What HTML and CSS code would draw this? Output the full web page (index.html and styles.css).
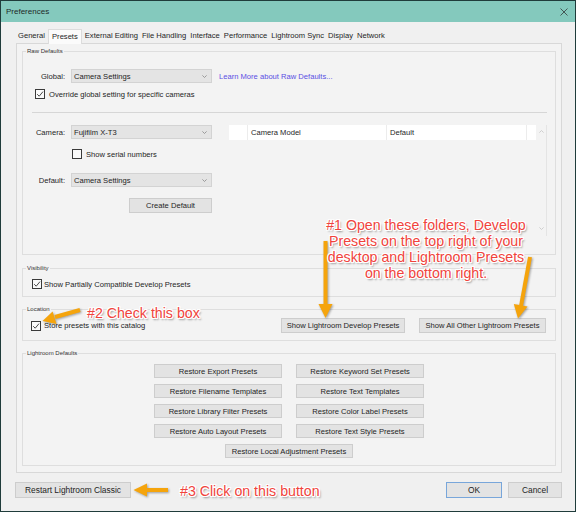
FILE: index.html
```html
<!DOCTYPE html>
<html lang="en">
<head>
<meta charset="utf-8">
<title>Preferences</title>
<link rel="stylesheet" href="styles.css">
</head>
<body>
<div class="window">
  <div class="titlebar">
    <span class="title">Preferences</span>
    <svg class="close" width="8" height="8" viewBox="0 0 8 8"><path d="M0.5 0.5L7.5 7.5M7.5 0.5L0.5 7.5" stroke="#3c4a48" stroke-width="0.9" fill="none"/></svg>
  </div>
  <div class="content">
    <div class="tabs">
      <span class="tab">General</span><span class="tab active">Presets</span><span class="tab">External Editing</span><span class="tab">File Handling</span><span class="tab">Interface</span><span class="tab">Performance</span><span class="tab">Lightroom Sync</span><span class="tab">Display</span><span class="tab">Network</span>
    </div>
    <div class="page">
      <fieldset class="group raw">
        <legend>Raw Defaults</legend>
        <div class="row global">
          <span class="lbl">Global:</span>
          <div class="select"><span>Camera Settings</span><svg class="chev" width="5" height="3" viewBox="0 0 5 3"><path d="M0.4 0.4L2.5 2.5L4.6 0.4" stroke="#888" stroke-width="0.8" fill="none"/></svg></div>
          <span class="link">Learn More about Raw Defaults...</span>
        </div>
        <div class="check-row override">
          <span class="cb"><svg width="8" height="8" viewBox="0 0 8 8"><path d="M1.2 4.2L3.2 6.2L7 1.6" stroke="#333" stroke-width="0.9" fill="none"/></svg></span>
          <span>Override global setting for specific cameras</span>
        </div>
        <div class="sep"></div>
        <div class="camera-area">
          <div class="cam-left">
            <div class="row">
              <span class="lbl">Camera:</span>
              <div class="select"><span>Fujifilm X-T3</span><svg class="chev" width="5" height="3" viewBox="0 0 5 3"><path d="M0.4 0.4L2.5 2.5L4.6 0.4" stroke="#888" stroke-width="0.8" fill="none"/></svg></div>
            </div>
            <div class="check-row serial">
              <span class="cb"></span>
              <span>Show serial numbers</span>
            </div>
            <div class="row default-row">
              <span class="lbl">Default:</span>
              <div class="select"><span>Camera Settings</span><svg class="chev" width="5" height="3" viewBox="0 0 5 3"><path d="M0.4 0.4L2.5 2.5L4.6 0.4" stroke="#888" stroke-width="0.8" fill="none"/></svg></div>
            </div>
            <button class="btn create">Create Default</button>
          </div>
          <div class="cam-table">
            <div class="table">
              <div class="thead">
                <span class="c0"></span><span class="c1">Camera Model</span><span class="c2">Default</span><span class="c3"></span>
              </div>
            </div>
            <div class="scroll">
              <svg width="5" height="3" viewBox="0 0 5 3"><path d="M0.4 2.6L2.5 0.5L4.6 2.6" stroke="#c4c4c4" stroke-width="0.8" fill="none"/></svg>
              <svg width="5" height="3" viewBox="0 0 5 3"><path d="M0.4 0.4L2.5 2.5L4.6 0.4" stroke="#c4c4c4" stroke-width="0.8" fill="none"/></svg>
            </div>
          </div>
        </div>
      </fieldset>

      <fieldset class="group visibility">
        <legend>Visibility</legend>
        <div class="check-row vis">
          <span class="cb"><svg width="8" height="8" viewBox="0 0 8 8"><path d="M1.2 4.2L3.2 6.2L7 1.6" stroke="#333" stroke-width="0.9" fill="none"/></svg></span>
          <span>Show Partially Compatible Develop Presets</span>
        </div>
      </fieldset>

      <fieldset class="group location">
        <legend>Location</legend>
        <div class="loc-row">
          <div class="check-row loc">
            <span class="cb"><svg width="8" height="8" viewBox="0 0 8 8"><path d="M1.2 4.2L3.2 6.2L7 1.6" stroke="#333" stroke-width="0.9" fill="none"/></svg></span>
            <span>Store presets with this catalog</span>
          </div>
          <div class="loc-buttons">
            <button class="btn show-dev">Show Lightroom Develop Presets</button>
            <button class="btn show-all">Show All Other Lightroom Presets</button>
          </div>
        </div>
      </fieldset>

      <fieldset class="group defaults">
        <legend>Lightroom Defaults</legend>
        <div class="restore-grid">
          <button class="btn">Restore Export Presets</button>
          <button class="btn">Restore Keyword Set Presets</button>
          <button class="btn">Restore Filename Templates</button>
          <button class="btn">Restore Text Templates</button>
          <button class="btn">Restore Library Filter Presets</button>
          <button class="btn">Restore Color Label Presets</button>
          <button class="btn">Restore Auto Layout Presets</button>
          <button class="btn">Restore Text Style Presets</button>
          <button class="btn wide">Restore Local Adjustment Presets</button>
        </div>
      </fieldset>
    </div>

    <div class="footer">
      <button class="btn restart">Restart Lightroom Classic</button>
      <div class="footer-right">
        <button class="btn ok">OK</button>
        <button class="btn cancel">Cancel</button>
      </div>
    </div>
  </div>

  <svg class="arrows" width="576" height="512" viewBox="0 0 576 512">
    <g fill="#f5a40c" stroke="#f5a40c">
      <line x1="325.5" y1="241" x2="325.5" y2="306" stroke-width="4"/>
      <polygon points="318.5,304 332.5,304 325.5,318" stroke="none"/>
      <line x1="530" y1="257" x2="521" y2="306" stroke-width="4"/>
      <polygon points="527.5,306.5 513.8,304 518,318.5" stroke="none"/>
      <line x1="80" y1="310" x2="55" y2="317" stroke-width="4"/>
      <polygon points="56.5,324 52.6,311.5 42.5,321" stroke="none"/>
      <line x1="168" y1="490" x2="146" y2="490" stroke-width="4"/>
      <polygon points="147,483.5 147,496.5 133.5,490" stroke="none"/>
    </g>
  </svg>
  <div class="note note1">#1 Open these folders, Develop<br>Presets on the top right of your<br>desktop and Lightroom Presets<br>on the bottom right.</div>
  <div class="note note2">#2 Check this box</div>
  <div class="note note3">#3 Click on this button</div>
</div>
</body>
</html>
```

FILE: styles.css
```css
* { box-sizing: border-box; }

html, body {
  margin: 0;
  padding: 0;
  background: #f0f0f0;
}

.window {
  position: relative;
  width: 576px;
  height: 512px;
  overflow: hidden;
  border: 1px solid #1f3c3b;
  background: #f0f0f0;
  font-family: "Liberation Sans", Arial, sans-serif;
  font-size: 7.6px;
  color: #1e1e1e;
  display: flex;
  flex-direction: column;
}

.titlebar {
  height: 21px;
  flex: none;
  background: #84c9bd;
  display: flex;
  align-items: center;
  justify-content: space-between;
  padding: 0 7px 0 5px;
}

.title {
  font-size: 8px;
  color: #1d2a28;
}

.close { display: block; }

.content {
  padding: 7px 13px 0 14px;
  display: flex;
  flex-direction: column;
}

.tabs {
  display: flex;
  height: 14px;
  padding-left: 1px;
}

.tab {
  padding: 0 2px;
  line-height: 14px;
  white-space: nowrap;
}

.tab.active {
  position: relative;
  z-index: 1;
  height: 15px;
  padding: 0 3px;
  margin: 0 1px;
  background: #fbfbfb;
  border: 1px solid #dcdcdc;
  border-bottom: none;
  line-height: 13px;
}

.page {
  border: 1px solid #d8d8d8;
  background: #f3f3f3;
  padding: 3px 5px 6px 5px;
  margin-left: 1px;
}

.group {
  margin: 0;
  padding: 0;
  min-inline-size: 0;
  border: 1px solid #dedede;
}

.group legend {
  font-size: 6px;
  line-height: 8px;
  padding: 0 1px;
  margin-left: 3px;
  color: #333;
}

.visibility { margin-top: 9px; padding: 7px 0 7px 0; }
.location { margin-top: 8px; padding: 5px 0 7px 0; }
.defaults { margin-top: 8px; padding: 7px 0 7px 0; }
.raw { padding: 0 0 18px 0; }

.row {
  display: flex;
  align-items: center;
  height: 14px;
}

.lbl {
  width: 42px;
  margin-right: 6px;
  text-align: right;
  white-space: nowrap;
}

.select {
  width: 141px;
  height: 14px;
  background: #e4e4e4;
  border: 1px solid #d3d3d3;
  display: flex;
  align-items: center;
  justify-content: space-between;
  padding: 0 4px 0 2px;
}

.chev { display: block; }

.link {
  margin-left: 7px;
  color: #5a4fe3;
  white-space: nowrap;
}

.global { margin-top: 14px; }

.check-row {
  display: flex;
  align-items: center;
  height: 10px;
  white-space: nowrap;
}

.cb {
  width: 10px;
  height: 10px;
  flex: none;
  border: 1px solid #3a3a3a;
  background: #fafafa;
  display: flex;
  align-items: center;
  justify-content: center;
  margin-right: 4px;
}

.cb svg { display: block; }

.override { margin-top: 6px; padding-left: 12px; }
.serial { margin-top: 10px; padding-left: 49px; }
.vis { padding-left: 9px; }
.vis .cb { margin-right: 2px; }
.loc .cb { margin-right: 3px; }

.sep {
  height: 1px;
  background: #d6d6d6;
  margin: 13px 8px 0 9px;
}

.camera-area {
  margin-top: 12px;
  display: flex;
}

.cam-left {
  width: 189px;
  display: flex;
  flex-direction: column;
}

.default-row { margin-top: 14px; }

.btn {
  font-family: inherit;
  font-size: 7.6px;
  color: #1e1e1e;
  background: #e3e3e3;
  border: 1px solid #cdcdcd;
  padding: 0;
  margin: 0;
  height: 15px;
  white-space: nowrap;
}

.create {
  margin-top: 11px;
  margin-left: 106px;
  width: 83px;
}

.cam-table {
  margin-left: 17px;
  width: 318px;
  height: 111px;
  display: flex;
}

.table {
  width: 307px;
}

.thead {
  display: flex;
  height: 15px;
  background: #ffffff;
  line-height: 15px;
}

.thead span { display: block; height: 15px; }
.c0 { width: 19px; border-right: 1px solid #ececec; }
.c1 { width: 139px; padding-left: 3px; border-right: 1px solid #ececec; }
.c2 { width: 140px; padding-left: 3px; border-right: 1px solid #ececec; }
.c3 { width: 9px; }

.scroll {
  width: 11px;
  border-right: 1px solid #e4e4e4;
  display: flex;
  flex-direction: column;
  align-items: center;
  justify-content: space-between;
  padding: 5px 0 6px 0;
}

.scroll svg { display: block; }

.loc-row {
  display: flex;
  align-items: center;
  justify-content: space-between;
  padding: 0 9px 0 8px;
}

.loc-buttons {
  display: flex;
  gap: 14px;
}

.show-dev { width: 124px; }
.show-all { width: 127px; }

.restore-grid {
  display: grid;
  grid-template-columns: 128px 128px;
  column-gap: 14px;
  row-gap: 6px;
  justify-content: center;
}

.restore-grid .btn { height: 14px; }

.restore-grid .wide {
  grid-column: 1 / -1;
  justify-self: center;
  width: 128px;
}

.footer {
  margin-top: 9px;
  display: flex;
  justify-content: space-between;
  align-items: center;
}

.footer .btn { height: 16px; font-size: 8.4px; }

.restart { width: 116px; }

.footer-right {
  display: flex;
  gap: 6px;
}

.ok { width: 56px; border-color: #78a6da; }
.cancel { width: 54px; }

.arrows {
  position: absolute;
  left: -1px;
  top: -1px;
  pointer-events: none;
  filter: drop-shadow(1px 1px 1px rgba(0, 0, 0, 0.35));
}

.note {
  position: absolute;
  font-family: "Liberation Sans", Arial, sans-serif;
  font-size: 14.2px;
  line-height: 16px;
  color: #f0433c;
  white-space: nowrap;
  text-shadow:
    -1px -1px 0 #fff, 1px -1px 0 #fff, -1px 1px 0 #fff, 1px 1px 0 #fff,
    0 -1px 0 #fff, 0 1px 0 #fff, -1px 0 0 #fff, 1px 0 0 #fff,
    1.5px 2px 2px rgba(0, 0, 0, 0.45);
}

.note1 {
  left: 305px;
  top: 216px;
  width: 240px;
  text-align: center;
}

.note2 { left: 86px; top: 304px; }
.note3 { left: 179px; top: 482px; }
```
